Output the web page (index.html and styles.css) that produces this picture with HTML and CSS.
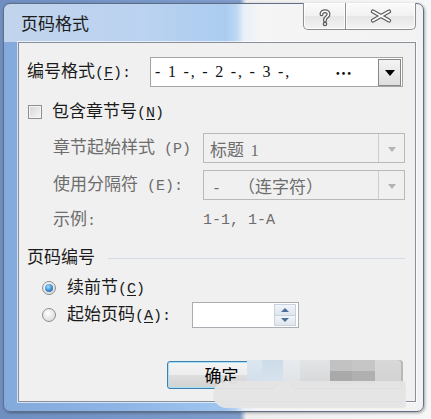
FILE: index.html
```html
<!DOCTYPE html>
<html lang="zh-CN">
<head>
<meta charset="utf-8">
<title>页码格式</title>
<link rel="stylesheet" href="styles.css">
</head>
<body>
<div class="frame">
  <div class="titlebar">
    <span class="title">页码格式</span>
    <div class="caps">
      <div class="cap cap-help">
        <svg width="14" height="19" viewBox="0 0 14 19">
          <path d="M3.5 6.2 C3.5 2.2 10.5 2.2 10.5 6.2 C10.5 9 7 9 7 11.8 V12.6" fill="none" stroke="#5a5a5a" stroke-width="4" stroke-linecap="round"/>
          <circle cx="7" cy="16" r="2.3" fill="#5a5a5a"/>
          <path d="M3.5 6.2 C3.5 2.2 10.5 2.2 10.5 6.2 C10.5 9 7 9 7 11.8 V12.6" fill="none" stroke="#fff" stroke-width="1.6" stroke-linecap="round"/>
          <circle cx="7" cy="16" r="1" fill="#fff"/>
        </svg>
      </div>
      <div class="cap cap-close">
        <svg width="22" height="14" viewBox="0 0 22 14">
          <path d="M3 2.5 L19 11.5 M19 2.5 L3 11.5" fill="none" stroke="#5a5a5a" stroke-width="4.2" stroke-linecap="round"/>
          <path d="M3 2.5 L19 11.5 M19 2.5 L3 11.5" fill="none" stroke="#fff" stroke-width="2" stroke-linecap="round"/>
        </svg>
      </div>
    </div>
  </div>

  <div class="client">
    <div class="row row-format">
      <span class="lbl lbl-format">编号格式<span class="acc">(<u>F</u>):</span></span>
      <div class="combo combo-format">
        <span class="seq">- 1 -, - 2 -, - 3 -,</span><span class="dots">…</span>
        <span class="dd"><span class="tri"></span></span>
      </div>
    </div>

    <div class="row row-check">
      <span class="checkbox"></span>
      <span class="lbl lbl-check">包含章节号<span class="acc">(<u>N</u>)</span></span>
    </div>

    <div class="row row-sub row-style">
      <span class="lbl lbl-sub">章节起始样式<span class="acc"> (P)</span></span>
      <div class="combo combo-dis">
        <span class="dis-text">标题 <span class="num">1</span></span>
        <span class="dd-dis"><span class="tri tri-dis"></span></span>
      </div>
    </div>

    <div class="row row-sub row-sep">
      <span class="lbl lbl-sub">使用分隔符<span class="acc"> (E):</span></span>
      <div class="combo combo-dis">
        <span class="dis-text"><span class="dash">-</span>（连字符）</span>
        <span class="dd-dis"><span class="tri tri-dis"></span></span>
      </div>
    </div>

    <div class="row row-sub row-example">
      <span class="lbl lbl-sub">示例<span class="acc">:</span></span>
      <span class="example">1-1, 1-A</span>
    </div>

    <div class="row row-section">
      <span class="section-title">页码编号</span>
      <span class="section-line"></span>
    </div>

    <div class="row row-radio1">
      <span class="radio on"></span>
      <span class="lbl lbl-radio">续前节<span class="acc">(<u>C</u>)</span></span>
    </div>

    <div class="row row-radio2">
      <span class="radio"></span>
      <span class="lbl lbl-radio lbl-start">起始页码<span class="acc">(<u>A</u>):</span></span>
      <div class="spinbox">
        <span class="spin">
          <span class="spin-half"><span class="tri-up"></span></span>
          <span class="spin-half"><span class="tri-down"></span></span>
        </span>
      </div>
    </div>

    <div class="row row-buttons">
      <button class="btn btn-ok">确定</button>
      <button class="btn btn-cancel">取消</button>
    </div>
  </div>

  <div class="wm-tiles">
    <span class="t t1"></span><span class="t t2"></span><span class="t t3"></span><span class="t t4"></span><span class="t t5"></span><span class="t t6"></span><span class="t t7"></span>
  </div>
  <div class="wm-pill"></div>
</div>
</body>
</html>
```

FILE: styles.css
```css
html, body {
  margin: 0;
  padding: 0;
}

body {
  width: 431px;
  height: 419px;
  overflow: hidden;
  background: linear-gradient(to right, #6f8fc2 0, #7f9ccb 240px, #eeeeee 246px, #f7f7f7 100%);
  font-family: "Noto Sans CJK SC", "Noto Sans", sans-serif;
  color: #1b1b1b;
}

.frame {
  position: relative;
  margin: 3px 0 0 3px;
  width: 421px;
  height: 409px;
  box-sizing: border-box;
  border: 1px solid #5f6f85;
  border-radius: 7px;
  background: linear-gradient(to right, #84aadb 0, #8fb5e6 120px, #9fc5ef 222px, #b9d5f2 232px, #e9f0f8 240px, #f5f5f5 256px, #f2f2f2 100%);
  display: flex;
  flex-direction: column;
  box-shadow: 1px 1px 3px rgba(0, 0, 0, 0.35);
}

.titlebar {
  height: 38px;
  display: flex;
  align-items: flex-start;
  border-radius: 6px 6px 0 0;
  background: linear-gradient(to right, rgba(255, 255, 255, 0.5) 0, rgba(255, 255, 255, 0.38) 140px, rgba(255, 255, 255, 0.12) 222px, rgba(255, 255, 255, 0) 236px);
}

.title {
  padding: 8px 0 0 17px;
  font-size: 17px;
  line-height: 22px;
  color: #1c1c1c;
}

.caps {
  margin-left: auto;
  margin-right: 7px;
  margin-top: -1px;
  display: flex;
  height: 27px;
}

.cap {
  box-sizing: border-box;
  height: 27px;
  border: 1px solid #8e8e8e;
  border-top: none;
  background: linear-gradient(#fbfbfb 0, #f1f1f1 50%, #e6e6e6 51%, #f3f3f3 100%);
  box-shadow: inset 0 0 0 1px rgba(255, 255, 255, 0.8);
  display: flex;
  align-items: center;
  justify-content: center;
}

.cap-help {
  width: 43px;
  border-radius: 0 0 0 5px;
}

.cap-close {
  width: 70px;
  border-left: none;
  border-radius: 0 0 5px 0;
}

.cap-help svg {
  margin-top: 2px;
}

.client {
  flex: 1;
  margin: 0 7px 9px 14px;
  border: 1px solid #8a9099;
  background: #f0f0f0;
  box-shadow: 0 0 0 1px rgba(255, 255, 255, 0.65);
  display: flex;
  flex-direction: column;
}

.row {
  display: flex;
  align-items: center;
  font-size: 17px;
}

.lbl {
  font-size: 17px;
  line-height: 22px;
  white-space: nowrap;
}

.acc {
  font-family: "Liberation Mono", monospace;
  font-size: 15px;
}

.acc u {
  text-underline-offset: 2px;
}

/* row 1 */
.row-format {
  margin-top: 14px;
  height: 30px;
  padding-left: 8px;
}

.lbl-format {
  width: 123px;
}

.combo {
  box-sizing: border-box;
  height: 30px;
  border: 1px solid #a4a4a4;
  background: #ffffff;
  display: flex;
  align-items: center;
}

.combo-format {
  width: 253px;
}

.seq {
  padding-left: 4px;
  font-family: "Liberation Serif", serif;
  font-size: 16px;
  letter-spacing: 1.8px;
  color: #111;
  white-space: pre;
}

.dots {
  margin-left: 44px;
  font-size: 17px;
  font-weight: 700;
  color: #111;
}

.dd {
  margin-left: auto;
  margin-right: 1px;
  box-sizing: border-box;
  width: 23px;
  height: 27px;
  border: 1px solid #888;
  background: linear-gradient(#f4f4f4, #dedede);
  display: flex;
  align-items: center;
  justify-content: center;
}

.tri {
  width: 0;
  height: 0;
  border-left: 5px solid transparent;
  border-right: 5px solid transparent;
  border-top: 6px solid #000;
  margin-top: 2px;
}

/* checkbox row */
.row-check {
  margin-top: 14px;
  height: 22px;
  padding-left: 9px;
}

.checkbox {
  box-sizing: border-box;
  width: 14px;
  height: 14px;
  border: 1px solid #8e8f8f;
  background: linear-gradient(135deg, #d6d6d6, #f6f6f6);
  box-shadow: inset 0 0 0 1px #f4f4f4;
}

.lbl-check {
  margin-left: 10px;
}

/* disabled rows */
.row-sub {
  padding-left: 34px;
  height: 30px;
}

.row-style {
  margin-top: 10px;
}

.row-sep {
  margin-top: 7px;
}

.row-example {
  margin-top: 5px;
}

.lbl-sub {
  width: 150px;
  color: #6d6d6d;
}

.combo-dis {
  width: 202px;
  border-color: #b9b9b9;
  background: #f0f0f0;
}

.dis-text {
  padding-left: 6px;
  color: #6d6d6d;
  font-size: 17px;
  white-space: nowrap;
}

.num {
  font-family: "Liberation Serif", serif;
  font-size: 16px;
  padding-left: 3px;
}

.dash {
  font-family: "Liberation Mono", monospace;
  font-size: 15px;
  display: inline-block;
  width: 26px;
  padding-left: 2px;
}

.dd-dis {
  margin-left: auto;
  width: 25px;
  height: 28px;
  border-left: 1px solid #cdcdcd;
  display: flex;
  align-items: center;
  justify-content: center;
}

.tri-dis {
  border-top-color: #b4b4b4;
  border-left-width: 4px;
  border-right-width: 4px;
  border-top-width: 5px;
}

.example {
  font-family: "Liberation Mono", monospace;
  font-size: 15px;
  color: #6d6d6d;
  white-space: pre;
}

/* section */
.row-section {
  margin-top: 10px;
  height: 22px;
  padding-left: 8px;
}

.section-title {
  font-size: 17px;
  line-height: 22px;
  color: #1b1b1b;
}

.section-line {
  flex: 1;
  height: 1px;
  margin: 4px 10px 0 13px;
  background: #d3dce4;
}

/* radios */
.row-radio1 {
  margin-top: 11px;
  height: 20px;
  padding-left: 23px;
}

.row-radio2 {
  margin-top: 4px;
  height: 26px;
  padding-left: 23px;
}

.radio {
  box-sizing: border-box;
  width: 14px;
  height: 14px;
  border-radius: 50%;
  border: 1px solid #8c8e90;
  background: radial-gradient(circle at 40% 35%, #ffffff 0, #e6e6e6 55%, #d2d2d2 100%);
  display: flex;
  align-items: center;
  justify-content: center;
}

.radio.on::after {
  content: "";
  width: 8px;
  height: 8px;
  border-radius: 50%;
  background: radial-gradient(circle at 40% 35%, #a6dcfb 0, #3a8ad0 55%, #1d4f86 100%);
}

.lbl-radio {
  margin-left: 11px;
}

.lbl-start {
  width: 125px;
}

.spinbox {
  box-sizing: border-box;
  width: 107px;
  height: 26px;
  border: 1px solid #abadb3;
  background: #ffffff;
  display: flex;
  justify-content: flex-end;
  align-items: center;
}

.spin {
  width: 22px;
  height: 22px;
  margin-right: 2px;
  display: flex;
  flex-direction: column;
}

.spin-half {
  flex: 1;
  box-sizing: border-box;
  border: 1px solid #c9d3de;
  background: linear-gradient(#f2f5f9, #dfe6ee);
  display: flex;
  align-items: center;
  justify-content: center;
}

.spin-half + .spin-half {
  border-top: none;
}

.tri-up {
  width: 0;
  height: 0;
  border-left: 4px solid transparent;
  border-right: 4px solid transparent;
  border-bottom: 4px solid #4e6f99;
}

.tri-down {
  width: 0;
  height: 0;
  border-left: 4px solid transparent;
  border-right: 4px solid transparent;
  border-top: 4px solid #4e6f99;
}

/* buttons */
.row-buttons {
  margin-top: 33px;
  height: 28px;
  padding-left: 148px;
}

.btn {
  box-sizing: border-box;
  height: 28px;
  padding: 0;
  border-radius: 3px;
  font-family: "Noto Sans CJK SC", sans-serif;
  font-size: 17px;
  line-height: 24px;
  color: #000;
  background: linear-gradient(#f4f4f4 0, #ececec 50%, #dedede 51%, #d2d2d2 100%);
}

.btn-ok {
  width: 109px;
  border: 1px solid #3c7fb1;
  box-shadow: inset 0 0 0 1px #a8e0f6;
}

.btn-cancel {
  width: 110px;
  margin-left: 16px;
  border: 1px solid #707070;
  box-shadow: inset 0 0 0 1px #fafafa;
}

/* watermark overlay */
.wm-tiles {
  position: absolute;
  left: 243px;
  top: 356px;
  width: 156px;
  height: 24px;
  display: flex;
}

.t {
  height: 100%;
}

.t1 { width: 15px; background: linear-gradient(#dbe6f0, #d2dfeb); }
.t2 { width: 21px; background: linear-gradient(#cddcea, #d8e3ec); }
.t3 { width: 17px; background: linear-gradient(#e7ebef, #dfe3e6); }
.t4 { width: 30px; background: linear-gradient(#e2e4e6, #d6d8d9); }
.t5 { width: 22px; background: linear-gradient(#c2c2c2 0, #c2c2c2 50%, #a9a9a9 51%, #a9a9a9 100%); border-bottom: 2px dotted #6a6a6a; box-sizing: border-box; }
.t6 { width: 23px; background: linear-gradient(#c6c6c6 0, #c6c6c6 50%, #b0b0b0 51%, #b0b0b0 100%); border-bottom: 2px dotted #7a7a7a; box-sizing: border-box; }
.t7 { width: 28px; background: linear-gradient(#d8d8d8, #d2d2d2); border-top-right-radius: 4px; box-shadow: inset -2px 0 0 #b9b9b9; }

.wm-pill {
  position: absolute;
  left: 209px;
  top: 377px;
  width: 193px;
  height: 27px;
  border-radius: 14px 4px 4px 14px;
  background: rgba(228, 228, 228, 0.96);
}
```
